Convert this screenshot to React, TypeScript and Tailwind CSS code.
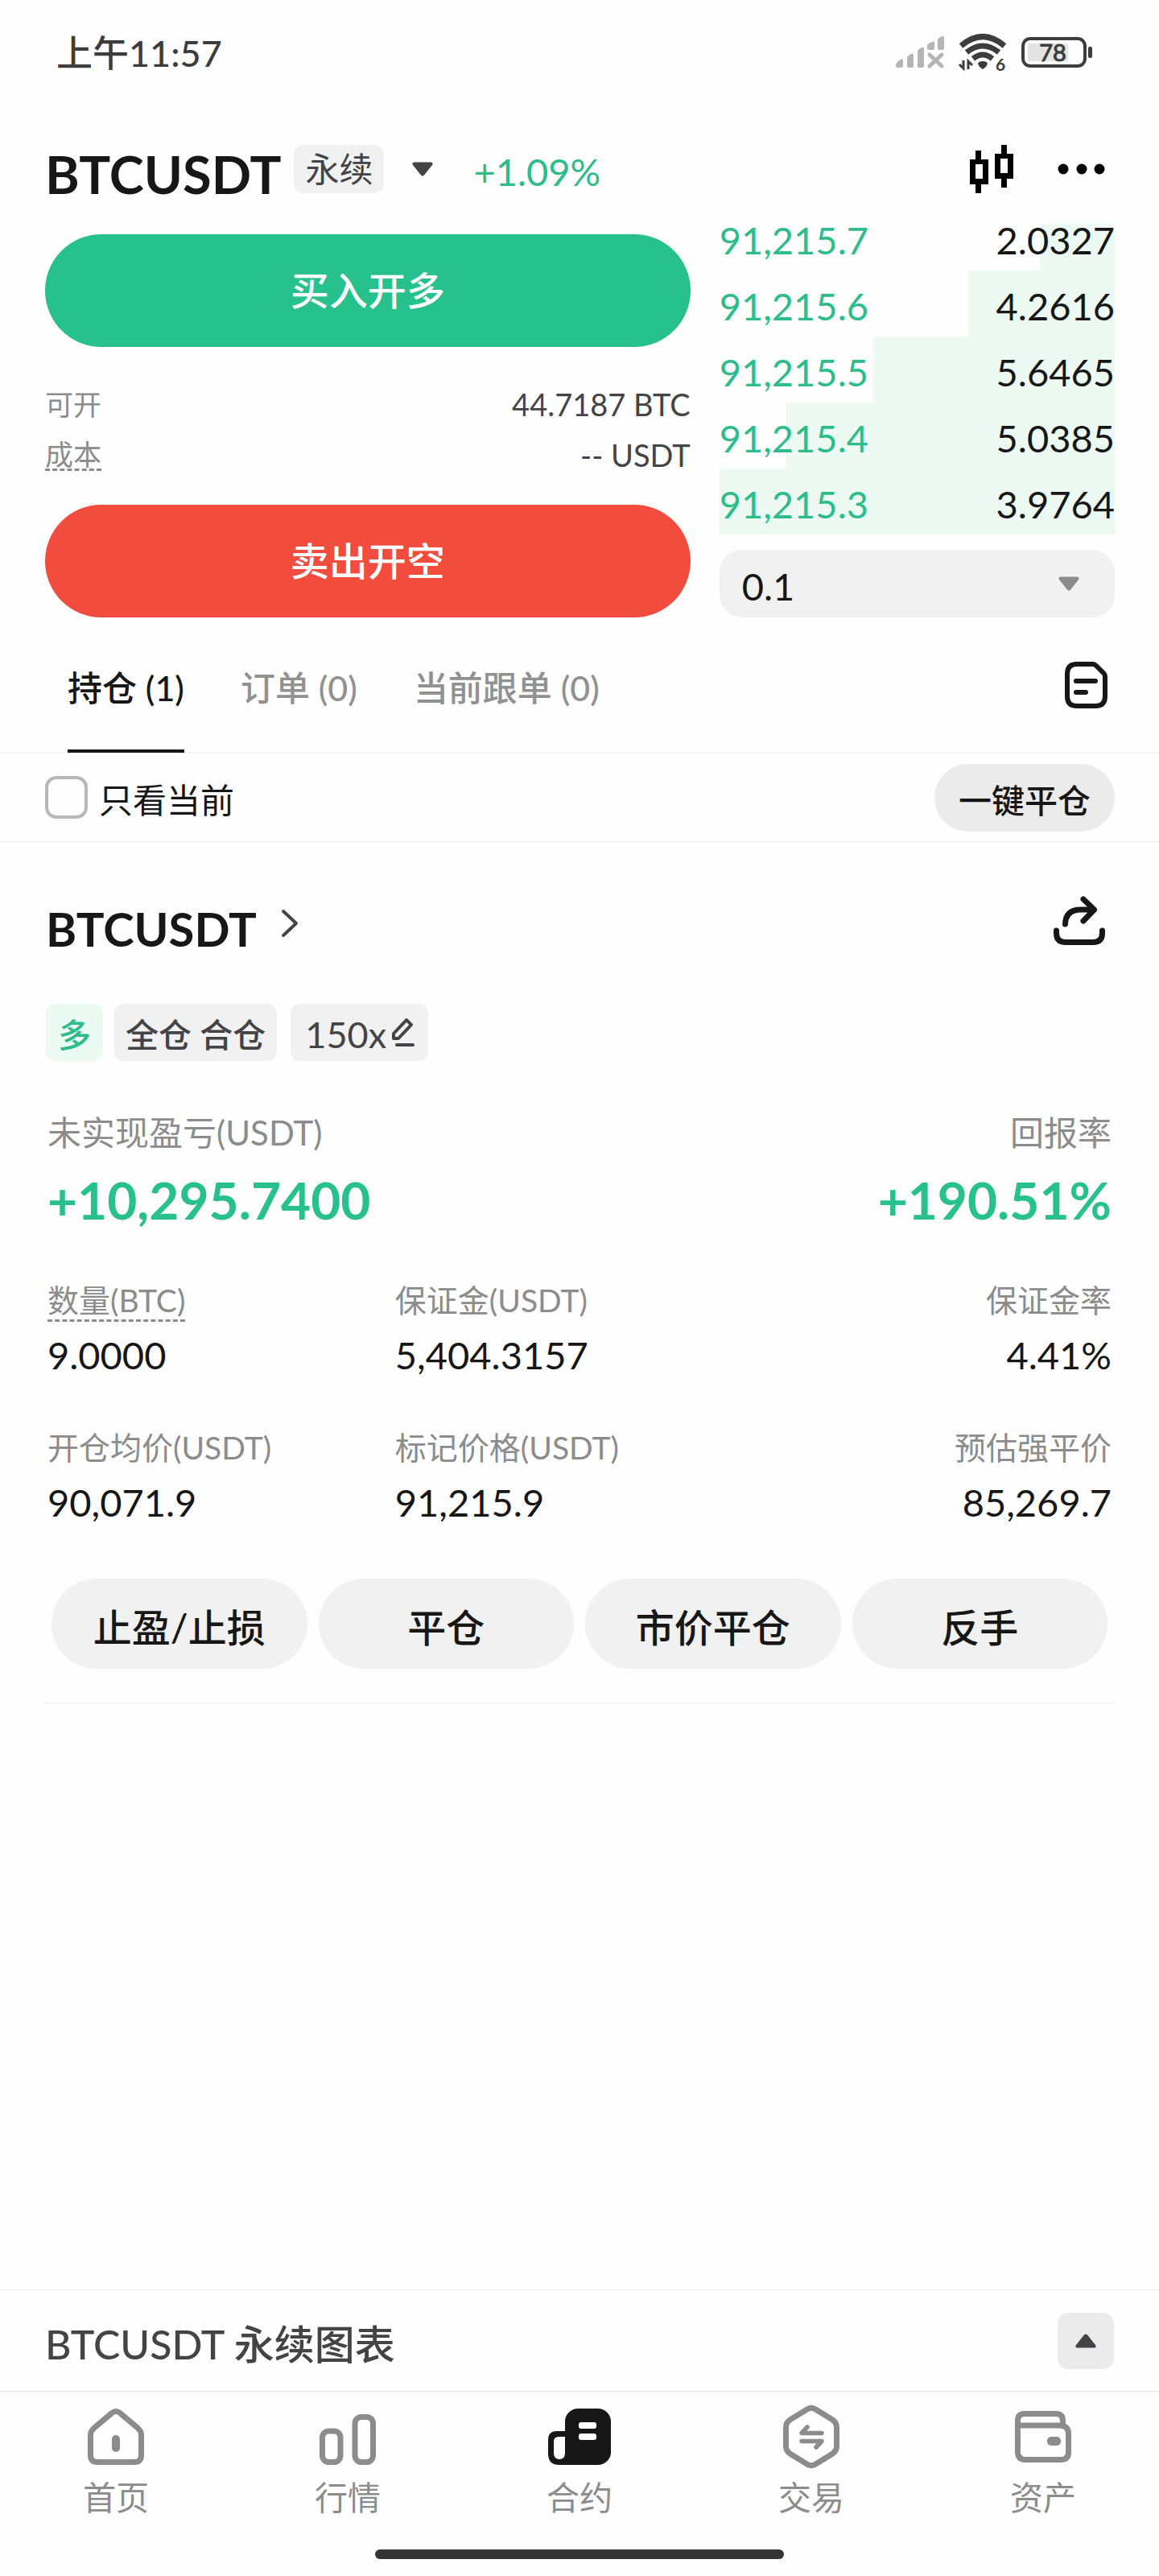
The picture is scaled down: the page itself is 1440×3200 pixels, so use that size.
import React, { useState } from 'react';

type BookRow = { price: string; size: string; depth: number };

const bids: BookRow[] = [
  { price: '91,215.7', size: '2.0327', depth: 19 },
  { price: '91,215.6', size: '4.2616', depth: 37 },
  { price: '91,215.5', size: '5.6465', depth: 61 },
  { price: '91,215.4', size: '5.0385', depth: 83 },
  { price: '91,215.3', size: '3.9764', depth: 100 }
];

const tabs = [
  { id: 'positions', label: '持仓 (1)' },
  { id: 'orders', label: '订单 (0)' },
  { id: 'copy', label: '当前跟单 (0)' }
];

const stats = [
  { label: '数量(BTC)', value: '9.0000', hint: true, right: false },
  { label: '保证金(USDT)', value: '5,404.3157', hint: false, right: false },
  { label: '保证金率', value: '4.41%', hint: false, right: true },
  { label: '开仓均价(USDT)', value: '90,071.9', hint: false, right: false },
  { label: '标记价格(USDT)', value: '91,215.9', hint: false, right: false },
  { label: '预估强平价', value: '85,269.7', hint: false, right: true }
];

const actions = ['止盈/止损', '平仓', '市价平仓', '反手'];

const SignalIcon = () => (
  <svg width="62" height="42" viewBox="0 0 62 42" fill="#b5b5b5" aria-hidden="true">
    <path d="M1 37 Q1 35 3 33 L7 30 Q10 28 10 31 V38 Q10 40 8 40 H3 Q1 40 1 38 Z" />
    <path d="M15 28 Q15 26 17 25 L20 23 Q23 22 23 24 V38 Q23 40 21 40 H17 Q15 40 15 38 Z" />
    <path d="M28 20 Q28 18 30 17 L33 15 Q36 14 36 17 V38 Q36 40 34 40 H30 Q28 40 28 38 Z" />
    <path d="M40 13 Q40 11 42 10 L46 8 Q49 7 49 9 V16 Q49 18 47 18 H42 Q40 18 40 16 Z" />
    <path d="M53 6 Q53 4 55 3 L58 1 Q61 0 61 3 V16 Q61 18 59 18 H55 Q53 18 53 16 Z" />
    <path d="M43 24 L58 38 M58 24 L43 38" stroke="#b5b5b5" strokeWidth="5" strokeLinecap="round" />
  </svg>
);

const WifiIcon = () => (
  <svg width="62" height="56" viewBox="0 -3 62 56" fill="none" stroke="#3d3d3d" aria-hidden="true">
    <path d="M4 17 Q31 -6 58 17" strokeWidth="7" />
    <path d="M11 25 Q31 9 51 25" strokeWidth="7" />
    <path d="M19 33 Q31 23 43 33" strokeWidth="7" />
    <path d="M31 36 Q36 36 37 39 Q36 43 31 46 Q26 43 25 39 Q26 36 31 36 Z" fill="#3d3d3d" stroke="none" />
    <path d="M7 35 V45 L2 40 M13 46 V36 L18 41" strokeWidth="3" />
    <text x="47" y="48" fontSize="21" fontWeight="700" fill="#3d3d3d" stroke="none" fontFamily="Lato, sans-serif">6</text>
  </svg>
);

const BatteryIcon = () => (
  <svg width="90" height="40" viewBox="0 0 90 40" aria-hidden="true">
    <rect x="3" y="3" width="77" height="34" rx="9" fill="none" stroke="#3d3d3d" strokeWidth="4" />
    <rect x="9" y="9" width="50" height="22" rx="2" fill="#e4e4e4" />
    <rect x="84" y="13" width="5" height="14" rx="2" fill="#3d3d3d" />
    <text x="40" y="31" textAnchor="middle" fontSize="29" fill="#3d3d3d" stroke="#3d3d3d" fontFamily="Lato, sans-serif">78</text>
  </svg>
);

const CandleIcon = () => (
  <svg width="62" height="66" viewBox="0 0 62 66" fill="#000" aria-hidden="true">
    <path d="M11 10 h7 v11 h9 v31 h-9 v11 h-7 v-11 h-7 v-31 h7 Z M11 27 v18 h9 v-18 Z" fillRule="evenodd" />
    <path d="M43 3 h7 v11 h8 v31 h-8 v11 h-7 v-11 h-8 v-31 h8 Z M42 20 v18 h9 v-18 Z" fillRule="evenodd" />
  </svg>
);

const DotsIcon = () => (
  <svg width="60" height="14" viewBox="0 0 60 14" fill="#000" aria-hidden="true">
    <circle cx="7" cy="7" r="6.5" />
    <circle cx="30" cy="7" r="6.5" />
    <circle cx="52" cy="7" r="6.5" />
  </svg>
);

const Caret = ({ className }: { className?: string }) => (
  <svg width="26" height="18" viewBox="0 0 26 18" className={className} fill="currentColor" aria-hidden="true">
    <path d="M3 0.5 H23 Q27 0.5 25 4 L15.500 16 Q13 19 10.500 16 L1 4 Q-1 0.5 3 0.5 Z" />
  </svg>
);

const DocIcon = () => (
  <svg width="60" height="66" viewBox="0 0 60 66" fill="none" stroke="#171717" strokeWidth="6" strokeLinecap="round" strokeLinejoin="round" aria-hidden="true">
    <path d="M18 7 H38 Q40 7 42 9 L51 18 Q53 20 53 22 V47 Q53 59 41 59 H18 Q6 59 6 47 V19 Q6 7 18 7 Z" />
    <path d="M17 28 H41 M17 42 H29" />
  </svg>
);

const ShareIcon = () => (
  <svg width="72" height="70" viewBox="0 0 72 70" fill="none" stroke="#171717" strokeWidth="7" strokeLinecap="round" strokeLinejoin="round" aria-hidden="true">
    <path d="M7.500 47 V50 Q7.500 61.500 19 61.500 H53 Q64.500 61.500 64.500 50 V47" />
    <path d="M18.500 39 Q19 21 38 21 H52 M41 8 L54.500 21 L41 35" />
  </svg>
);

const EditIcon = () => (
  <svg width="30" height="38" viewBox="0 0 30 38" fill="none" stroke="#444446" strokeWidth="4" strokeLinecap="round" strokeLinejoin="round" aria-hidden="true">
    <path d="M3 26 V20 L19 3 L25 9 L9 26 Z" />
    <path d="M7 34 H27" />
  </svg>
);

const HomeIcon = () => (
  <svg width="80" height="80" viewBox="0 0 80 80" fill="none" stroke="#8c8c8c" strokeWidth="7" aria-hidden="true">
    <path d="M35 10.500 Q40 6.500 45 10.500 L67 29 Q71.500 33 71.500 38 V63 Q71.500 71.500 63 71.500 H17 Q8.500 71.500 8.500 63 V38 Q8.500 33 13 29 Z" />
    <rect x="35" y="38" width="10" height="21" rx="5" fill="#8c8c8c" stroke="none" />
  </svg>
);

const MarketIcon = () => (
  <svg width="80" height="80" viewBox="0 0 80 80" fill="none" stroke="#8c8c8c" strokeWidth="7" aria-hidden="true">
    <rect x="8.500" y="33" width="22.500" height="38.500" rx="8" />
    <rect x="49" y="15.500" width="22.500" height="56" rx="8" />
  </svg>
);

const FuturesIcon = () => (
  <svg width="80" height="80" viewBox="0 0 80 80" fill="#171717" aria-hidden="true">
    <rect x="22" y="5" width="57" height="70" rx="16" />
    <path d="M12 33 H30 V75 H15 Q1 75 1 61 V44 Q1 33 12 33 Z M14 40 Q8 40 8 46 V60 Q8 68 15 68 Q22 68 22 60 V40 Z" fillRule="evenodd" />
    <rect x="22" y="56" width="20" height="19" />
    <rect x="39" y="22" width="22" height="8" rx="3" fill="#fff" />
    <rect x="39" y="36" width="22" height="8" rx="3" fill="#fff" />
  </svg>
);

const TradeIcon = () => (
  <svg width="80" height="80" viewBox="0 0 80 80" fill="none" stroke="#8c8c8c" strokeWidth="7" aria-hidden="true">
    <path d="M35.500 5.500 Q40 3 44.500 5.500 L65 18 Q71.500 22 71.500 28 V52 Q71.500 58 65 62 L44.500 74.500 Q40 77 35.500 74.500 L15 62 Q8.500 58 8.500 52 V28 Q8.500 22 15 18 Z" />
    <path d="M35 28 L28 35.500 H53 M28 45.500 H53 L46 53" strokeWidth="5.500" strokeLinecap="round" strokeLinejoin="round" />
  </svg>
);

const WalletIcon = () => (
  <svg width="80" height="80" viewBox="0 0 80 80" fill="none" stroke="#8c8c8c" strokeWidth="7" aria-hidden="true">
    <path d="M8.500 26 H62 Q71.500 27 71.500 36 V59 Q71.500 68.500 62 68.500 H18 Q8.500 68.500 8.500 59 V20 Q8.500 11.500 17 11.500 H56 Q64.500 11.500 64.500 20 V27" />
    <rect x="45" y="40" width="17" height="11" rx="5" fill="#8c8c8c" stroke="none" />
  </svg>
);

const navItems = [
  { label: '首页', icon: <HomeIcon /> },
  { label: '行情', icon: <MarketIcon /> },
  { label: '合约', icon: <FuturesIcon /> },
  { label: '交易', icon: <TradeIcon /> },
  { label: '资产', icon: <WalletIcon /> }
];

const App = () => {
  const [activeTab, setActiveTab] = useState('positions');
  const [onlyCurrent, setOnlyCurrent] = useState(false);
  const [step, setStep] = useState('0.1');

  return (
    <div className="min-h-screen flex flex-col bg-[#fefefe] text-[#171717] font-[Lato,'Noto_Sans_CJK_SC',sans-serif]">
      {/* Status bar */}
      <div className="flex items-center justify-between h-[130px] pl-[70px] pr-[82px] text-[#3d3d3d]">
        <span className="pt-[2px] text-[45px] leading-[56px] font-medium">上午11:57</span>
        <div className="flex items-center gap-4">
          <SignalIcon />
          <WifiIcon />
          <BatteryIcon />
        </div>
      </div>

      {/* Symbol header */}
      <header className="flex items-center h-[148px] pt-3 pl-[56px] pr-[66px]">
        <h1 className="pt-3 text-[65px] leading-[72px] font-bold">BTCUSDT</h1>
        <span className="ml-4 px-[14px] rounded-xl bg-[#f1f1f1] text-[42px] leading-[60px] text-[#444446]">永续</span>
        <button type="button" aria-label="切换合约" className="ml-[35px]">
          <Caret className="text-[#444446]" />
        </button>
        <span className="ml-[50px] pt-[6px] text-[47px] leading-[56px] text-[#2dbd8c]">+1.09%</span>
        <div className="ml-auto flex items-center gap-[51px]">
          <button type="button" aria-label="K线">
            <CandleIcon />
          </button>
          <button type="button" aria-label="更多">
            <DotsIcon />
          </button>
        </div>
      </header>

      {/* Order form and book */}
      <section className="grid grid-cols-[62fr_38fr] gap-9 pl-[56px] pr-[55px]">
        <div className="pt-[13px]">
          <button type="button" className="w-full h-[140px] rounded-full bg-[#26c18d] text-white text-[48px] font-medium">
            买入开多
          </button>
          <div className="mt-10 mb-[30px] leading-[63px] text-[#444446]">
            <div className="flex items-center justify-between">
              <span className="text-[35px] text-[#8c8c8c]">可开</span>
              <span className="text-[38px]">44.7187 BTC</span>
            </div>
            <div className="flex items-center justify-between">
              <span className="text-[35px] leading-[36px] text-[#8c8c8c] border-b-3 border-dashed border-[#8c8c8c]">成本</span>
              <span className="text-[38px]">-- USDT</span>
            </div>
          </div>
          <button type="button" className="w-full h-[140px] rounded-full bg-[#f24c3f] text-white text-[48px] font-medium">
            卖出开空
          </button>
        </div>

        <div>
          <ul className="text-[47px] leading-[36px]">
            {bids.map((row) => (
              <li key={row.price} className="relative flex items-end justify-between h-[82px] pb-5 first:h-[58px]">
                <div className="absolute inset-y-0 right-0 bg-[#ecfaf3]" style={{ width: `${row.depth}%` }} />
                <span className="relative text-[#2dbd8c]">{row.price}</span>
                <span className="relative">{row.size}</span>
              </li>
            ))}
          </ul>
          <div className="relative mt-[19px]">
            <select
              aria-label="价格精度"
              value={step}
              onChange={(e) => setStep(e.target.value)}
              className="w-full h-[84px] pl-7 pt-[6px] rounded-[28px] bg-[#f1f1f1] text-[47px] appearance-none"
            >
              <option>0.1</option>
              <option>1</option>
              <option>10</option>
            </select>
            <Caret className="absolute right-11 top-[33px] text-[#8c8c8c] pointer-events-none" />
          </div>
        </div>
      </section>

      {/* Tabs */}
      <div className="flex items-center justify-between h-[169px] pl-[84px] pr-[60px] border-b border-[#ededed]">
        <div className="flex h-full gap-[70px]" role="tablist">
          {tabs.map((tab) => (
            <button
              key={tab.id}
              type="button"
              role="tab"
              aria-selected={activeTab === tab.id}
              onClick={() => setActiveTab(tab.id)}
              className={`h-full pt-3 border-b-4 text-[43px] font-medium ${
                activeTab === tab.id ? 'border-[#171717] text-[#171717]' : 'border-transparent text-[#919191]'
              }`}
            >
              {tab.label}
            </button>
          ))}
        </div>
        <button type="button" aria-label="历史记录">
          <DocIcon />
        </button>
      </div>

      {/* Filter row */}
      <div className="flex items-center justify-between h-[110px] pl-[56px] pr-[55px] border-b border-[#ededed]">
        <label className="flex items-center gap-[14px]">
          <input
            type="checkbox"
            checked={onlyCurrent}
            onChange={(e) => setOnlyCurrent(e.target.checked)}
            className="appearance-none size-[53px] rounded-[14px] border-4 border-[#b8b8b8] checked:bg-[#171717]"
          />
          <span className="pt-[6px] text-[42px] leading-[50px]">只看当前</span>
        </label>
        <button type="button" className="h-[84px] px-[30px] pt-2 rounded-full bg-[#ebebeb] text-[41px] font-medium">
          一键平仓
        </button>
      </div>

      {/* Position card */}
      <main className="flex-1 px-[57px]">
        <div className="pt-[61px] pb-[42px] border-b border-[#ededed]">
          <div className="flex items-center justify-between h-20 pr-[6px]">
            <a href="#position" className="flex items-center gap-[30px]">
              <h2 className="pt-[14px] text-[58px] leading-[66px] font-bold">BTCUSDT</h2>
              <svg width="22" height="36" viewBox="0 0 22 36" fill="none" stroke="#444446" strokeWidth="4" strokeLinecap="round" strokeLinejoin="round" aria-hidden="true">
                <path d="M3 3 L19 18 L3 33" />
              </svg>
            </a>
            <button type="button" aria-label="分享" className="pb-[6px]">
              <ShareIcon />
            </button>
          </div>

          <div className="flex items-center mt-[60px] text-[41px] leading-[65px] text-[#444446]">
            <span className="px-[15px] pt-[6px] rounded-xl bg-[#ebfaf3] font-medium text-[#2dbd8c]">多</span>
            <span className="ml-[14px] px-[14px] pt-[6px] rounded-xl bg-[#f1f1f1] font-medium">全仓 合仓</span>
            <button type="button" className="flex items-center ml-[17px] pl-[18px] pr-4 gap-[6px] rounded-xl bg-[#f1f1f1]">
              <span className="pt-[6px] text-[45px]">150x</span>
              <EditIcon />
            </button>
          </div>

          <div className="flex justify-between mt-[61px] px-[2px]">
            <div>
              <div className="text-[42px] leading-[56px] text-[#8c8c8c]">未实现盈亏(USDT)</div>
              <div className="mt-[19px] text-[64px] leading-[74px] font-bold text-[#28c08d]">+10,295.7400</div>
            </div>
            <div className="text-right">
              <div className="text-[42px] leading-[56px] text-[#8c8c8c]">回报率</div>
              <div className="mt-[19px] text-[64px] leading-[74px] font-bold text-[#28c08d]">+190.51%</div>
            </div>
          </div>

          <dl className="grid grid-cols-[49fr_50fr_51fr] gap-y-[63px] mt-16 px-[2px]">
            {stats.map((item) => (
              <div key={item.label} className={`h-[120px] ${item.right ? 'text-right' : ''}`}>
                <dt className="h-[63px] text-[39px] leading-[47px] text-[#8c8c8c]">
                  <span className={item.hint ? 'inline-block border-b-3 border-dashed border-[#8c8c8c]' : ''}>{item.label}</span>
                </dt>
                <dd className="text-[47px] leading-[56px]">{item.value}</dd>
              </div>
            ))}
          </dl>

          <div className="grid grid-cols-4 gap-[14px] mt-[66px] px-[7px]">
            {actions.map((action) => (
              <button key={action} type="button" className="h-28 pt-[10px] rounded-full bg-[#f1f1f1] text-[48px] font-medium">
                {action}
              </button>
            ))}
          </div>
        </div>
      </main>

      {/* Chart drawer */}
      <div className="flex items-center justify-between h-[126px] pl-[56px] pr-[56px] border-t border-[#ededed]">
        <span className="pt-2 text-[50px] leading-[60px] font-medium text-[#444446]">BTCUSDT 永续图表</span>
        <button type="button" aria-label="展开图表" className="flex items-center justify-center size-[70px] rounded-[14px] bg-[#ebebeb]">
          <Caret className="rotate-180 text-[#444446]" />
        </button>
      </div>

      {/* Bottom navigation */}
      <footer className="border-t border-[#e4e4e4] pt-4 pb-[21px]">
        <nav className="grid grid-cols-5">
          {navItems.map((item) => (
            <a key={item.label} href="#nav" className="flex flex-col items-center gap-3 text-[41px] leading-[48px] text-[#8c8c8c]">
              {item.icon}
              {item.label}
            </a>
          ))}
        </nav>
        <div className="w-[508px] h-3 mx-auto mt-10 rounded-full bg-[#333333]" />
      </footer>
    </div>
  );
};

export default App;
